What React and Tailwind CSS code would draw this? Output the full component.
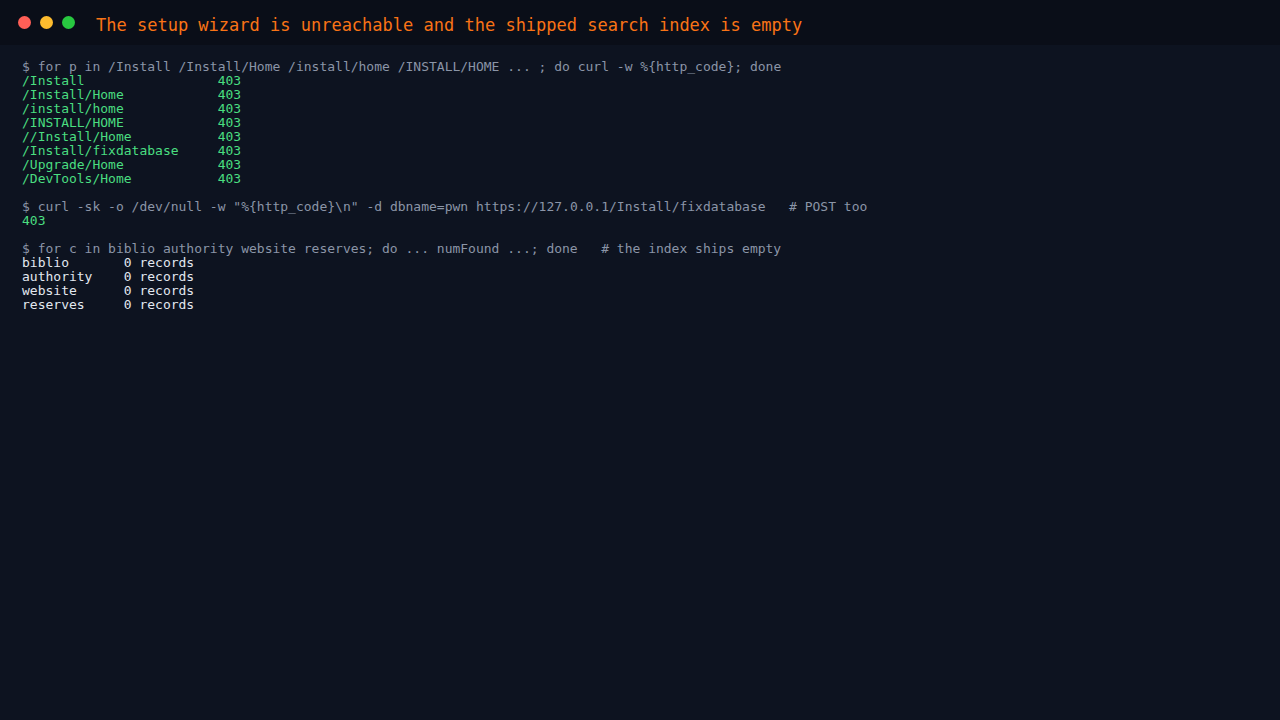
import React from "react";

const mono = { fontFamily: '"DejaVu Sans Mono", "Liberation Mono", monospace' };

function Line({ children, className = "" }) {
  return <div className={`h-[14px] leading-[14px] whitespace-pre ${className}`}>{children}</div>;
}

export default function App() {
  const paths = [
    "/Install",
    "/Install/Home",
    "/install/home",
    "/INSTALL/HOME",
    "//Install/Home",
    "/Install/fixdatabase",
    "/Upgrade/Home",
    "/DevTools/Home",
  ];
  const cores = ["biblio", "authority", "website", "reserves"];
  return (
    <div className="w-[1280px] h-[720px] bg-[#0d1320] flex flex-col overflow-hidden" style={mono}>
      <div className="h-[45px] bg-[#0a0e18] flex items-center pl-[18px] shrink-0">
        <div className="flex gap-[9px]">
          <span className="w-[13px] h-[13px] rounded-full bg-[#ff5f57]" />
          <span className="w-[13px] h-[13px] rounded-full bg-[#febc2e]" />
          <span className="w-[13px] h-[13px] rounded-full bg-[#28c840]" />
        </div>
        <div className="ml-[21px] pt-[5px] text-[17px] text-[#f97316] leading-none">
          The setup wizard is unreachable and the shipped search index is empty
        </div>
      </div>
      <div className="pt-[15px] pl-[22px] text-[13px]">
        <Line className="text-[#8b95a7]">$ for p in /Install /Install/Home /install/home /INSTALL/HOME ... ; do curl -w %{"{"}http_code{"}"}; done</Line>
        {paths.map((p) => (
          <Line key={p} className="text-[#4ade80]">{p.padEnd(25, " ")}403</Line>
        ))}
        <Line> </Line>
        <Line className="text-[#8b95a7]">$ curl -sk -o /dev/null -w "%{"{"}http_code{"}"}\n" -d dbname=pwn https://127.0.0.1/Install/fixdatabase   # POST too</Line>
        <Line className="text-[#4ade80]">403</Line>
        <Line> </Line>
        <Line className="text-[#8b95a7]">$ for c in biblio authority website reserves; do ... numFound ...; done   # the index ships empty</Line>
        {cores.map((c) => (
          <Line key={c} className="text-[#e2e8f0]">{c.padEnd(13, " ")}0 records</Line>
        ))}
      </div>
    </div>
  );
}
